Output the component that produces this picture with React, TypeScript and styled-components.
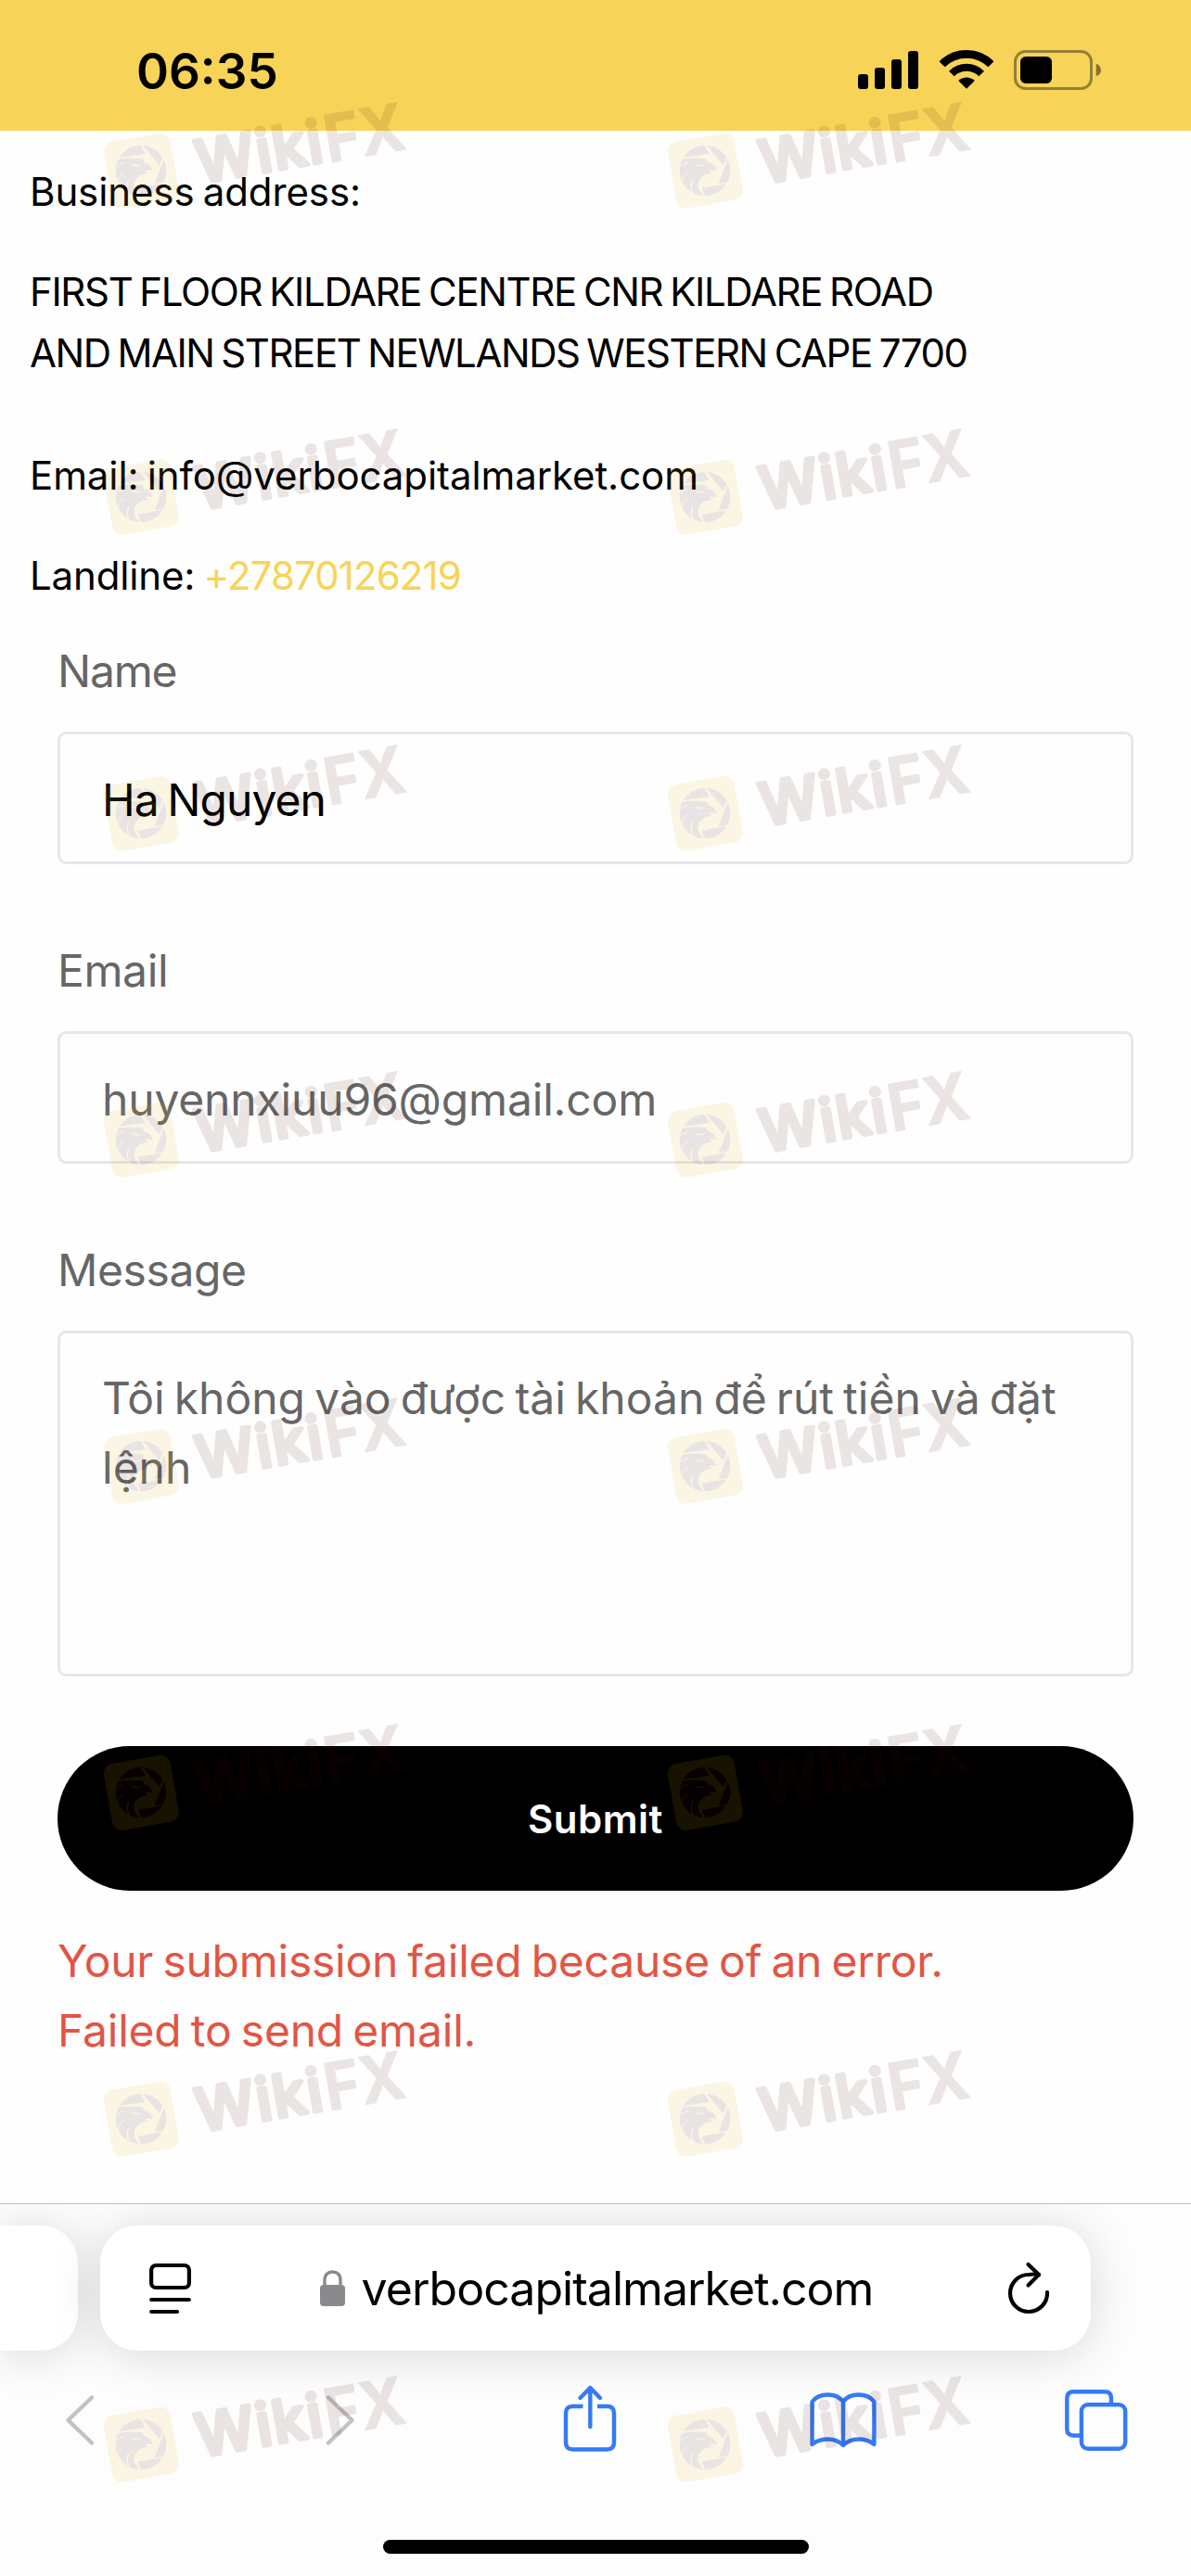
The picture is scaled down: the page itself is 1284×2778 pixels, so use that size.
import * as React from 'react';
import styled, { createGlobalStyle } from 'styled-components';

const GlobalStyle = createGlobalStyle`
  *, *::before, *::after { box-sizing: border-box; }
  body { margin: 0; background: #fff; }
`;

const Screen = styled.div`
  position: relative;
  width: 1284px;
  height: 2778px;
  overflow: hidden;
  display: flex;
  flex-direction: column;
  background: #fefefe;
  font-family: Inter, 'Noto Sans', sans-serif;
  color: #000;
`;

const StatusBar = styled.header`
  flex: none;
  height: 141px;
  background: #f7d358;
  display: flex;
  justify-content: space-between;
  padding: 45px 97px 0 147px;
`;

const Time = styled.span`
  font-size: 53px;
  line-height: 64px;
  font-weight: 600;
`;

const StatusIcons = styled.div`
  display: flex;
  gap: 22.5px;
  padding-top: 9px;

  svg {
    display: block;
  }
`;

const Address = styled.section`
  padding: 33px 32px 0;
  font-size: 42px;
  line-height: 66px;
  word-spacing: -2.5px;
`;

const Line = styled.p<{ $tracking?: number; $gap?: number }>`
  margin: 0 0 ${({ $gap = 0 }) => $gap}px;
  letter-spacing: ${({ $tracking = 0 }) => $tracking}px;
  white-space: pre;
`;

const Phone = styled.a`
  color: #f7d358;
  letter-spacing: -0.9px;
`;

const Form = styled.form`
  display: flex;
  flex-direction: column;
  margin: 32px 62px 0;
  font-size: 48px;
  line-height: 75px;
`;

const Label = styled.label<{ $tracking?: number }>`
  margin-bottom: 28px;
  color: #666;
  letter-spacing: ${({ $tracking = -0.4 }) => $tracking}px;
`;

const Input = styled.input<{ $color: string; $tracking: number }>`
  height: 143px;
  margin-bottom: 77px;
  padding: 4px 45px 0;
  border: 3px solid #e6e6eb;
  border-radius: 9px;
  outline: none;
  background: transparent;
  color: ${({ $color }) => $color};
  font: inherit;
  letter-spacing: ${({ $tracking }) => $tracking}px;
  word-spacing: -3px;
`;

const Textarea = styled.textarea`
  height: 373px;
  padding: 32px 20px 0 45px;
  border: 3px solid #e6e6eb;
  border-radius: 9px;
  outline: none;
  resize: none;
  background: transparent;
  color: #666;
  font: inherit;
  word-spacing: -3.4px;
`;

const Submit = styled.button`
  height: 156px;
  margin-top: 75px;
  border: 0;
  border-radius: 78px;
  background: #000;
  color: #fff;
  font: 600 42px Inter, 'Noto Sans', sans-serif;
  letter-spacing: 0.5px;
`;

const ErrorText = styled.div`
  margin-top: 38px;
  color: #e25544;
  word-spacing: -3px;
`;

const BrowserBar = styled.footer`
  display: flex;
  flex-direction: column;
  height: 402px;
  margin-top: auto;
  padding-top: 23px;
  border-top: 1px solid #bdbdbd;
  background: #fdfdfd;
  overflow: hidden;
`;

const TabStrip = styled.div`
  display: flex;
  gap: 24px;
`;

const PreviousTab = styled.div`
  width: 84px;
  height: 135px;
  border-radius: 0 40px 40px 0;
  background: #fff;
  box-shadow: 0 4px 52px rgba(0, 0, 0, 0.15);
`;

const UrlBar = styled.div`
  display: flex;
  align-items: center;
  justify-content: space-between;
  width: 1068px;
  height: 135px;
  padding: 0 44px 0 53px;
  border-radius: 40px;
  background: #fff;
  box-shadow: 0 4px 52px rgba(0, 0, 0, 0.15);

  svg {
    display: block;
  }
`;

const Url = styled.div`
  display: flex;
  align-items: center;
  gap: 18px;
  padding-right: 6px;
  font-size: 50px;
  line-height: 60px;
  letter-spacing: -0.97px;
  white-space: nowrap;
`;

const Toolbar = styled.nav`
  display: grid;
  grid-template-columns: 281px 269px 273px 273px 72px;
  padding: 33px 0 0 50px;
`;

const ToolbarIcon = styled.svg<{ $color?: string }>`
  display: block;
  width: 72px;
  height: 80px;
  fill: none;
  stroke: ${({ $color = '#357af6' }) => $color};
  stroke-width: 4.4;
  stroke-linecap: round;
  stroke-linejoin: round;
`;

const HomeIndicator = styled.div`
  width: 459px;
  height: 15px;
  margin: 91px auto 0;
  border-radius: 8px;
  background: #000;
`;

const WatermarkLayer = styled.div`
  position: absolute;
  inset: 0;
  display: grid;
  grid-template-columns: 608px 608px;
  grid-template-rows: 352px 341px repeat(4, 352px) 351px 352px;
  align-content: start;
  padding: 105px 0 0 92px;
  opacity: 0.1;
  pointer-events: none;

  svg {
    display: block;
    overflow: visible;
  }
`;

const Watermark: React.FC = () => (
  <svg width="400" height="120" viewBox="0 90 1200 360">
    <g transform="translate(30 180)">
      <rect x="42" y="39" width="218" height="218" rx="31" fill="#ebaf05" transform="rotate(-10 151 148)" />
      <clipPath id="shutter">
        <circle cx="150" cy="147" r="82" />
      </clipPath>
      <g clipPath="url(#shutter)" fill="#401010">
        <path d="M78 105L164 93L146 62L90 50L60 90Z" />
        <path d="M153 62L209 130L223 98L250 60L190 40Z" />
        <path d="M226 106L194 189L220 186L260 150Z" />
        <path d="M140 203L216 190L205 250L154 240Z" />
        <path d="M60 114C90 105 120 107 148 108C156 109 161 114 158 120C175 122 187 135 187 149C180 145 172 145 163 148C167 152 169 153 176 156C160 155 150 160 142 166C128 177 124 196 132 210C136 218 141 224 146 231C120 240 50 220 50 160Z" />
      </g>
      <g fill="none" stroke="#ebaf05" strokeLinecap="round">
        <path d="M124 127C131 132 138 134 146 129" strokeWidth="4" />
        <path d="M70 135C78 127 86 123 95 122" strokeWidth="3" />
        <path d="M75 182C77 170 84 160 94 152" strokeWidth="3" />
        <path d="M112 223C105 208 104 192 110 178" strokeWidth="4" />
      </g>
    </g>
    <g transform="translate(365 375) rotate(-9.85)" fill="#440a00" stroke="#440a00" strokeLinejoin="round" fontFamily="Inter, sans-serif">
      <text x="6" y="-6" textLength="412" lengthAdjust="spacing" fontSize="190" fontWeight="500" strokeWidth="14">
        Wiki
      </text>
      <text x="427" y="0" textLength="262" lengthAdjust="spacingAndGlyphs" fontSize="212" fontWeight="700" strokeWidth="3">
        FX
      </text>
    </g>
  </svg>
);

const watermarks = Array.from({ length: 16 }, (_, i) => i);

export default function App() {
  return (
    <Screen>
      <GlobalStyle />
      <StatusBar>
        <Time>06:35</Time>
        <StatusIcons>
          <svg width="65" height="43" viewBox="45 42 195 129">
            <rect x="45" y="120" width="33" height="48" rx="9" />
            <rect x="99" y="99" width="33" height="69" rx="9" />
            <rect x="153" y="72" width="33" height="96" rx="9" />
            <rect x="207" y="45" width="33" height="123" rx="9" />
          </svg>
          <svg width="58" height="43" viewBox="307 42 174 129" fill="none" stroke="#000">
            <path d="M314.8 87.8A112 112 0 0 1 473.2 87.8" strokeWidth="26" />
            <path d="M345.6 118.6A68.5 68.5 0 0 1 442.4 118.6" strokeWidth="24" />
            <path d="M394 167L367.5 141A38 38 0 0 1 420.5 141Z" fill="#000" stroke="none" />
          </svg>
          <svg width="94" height="43" viewBox="549 42 282 129">
            <rect x="553.5" y="46.5" width="246" height="120" rx="33" fill="none" stroke="#938036" strokeWidth="9" />
            <rect x="570" y="63" width="102" height="87" rx="17" />
            <path d="M815 86C836 92 836 121 815 127Z" fill="#85722f" />
          </svg>
        </StatusIcons>
      </StatusBar>

      <Address>
        <Line $gap={42} $tracking={-0.1}>
          Business address:
        </Line>
        <Line $tracking={-1.35}>FIRST FLOOR KILDARE CENTRE CNR KILDARE ROAD</Line>
        <Line $gap={66} $tracking={-1.45}>
          AND MAIN STREET NEWLANDS WESTERN CAPE 7700
        </Line>
        <Line $gap={42} $tracking={-0.09}>
          Email: info@verbocapitalmarket.com
        </Line>
        <Line $tracking={-0.15}>
          Landline: <Phone>+27870126219</Phone>
        </Line>
      </Address>

      <Form>
        <Label htmlFor="name" $tracking={-1.2}>
          Name
        </Label>
        <Input id="name" defaultValue="Ha Nguyen" $color="#000" $tracking={-0.95} />
        <Label htmlFor="email">Email</Label>
        <Input id="email" defaultValue="huyennxiuu96@gmail.com" $color="#666" $tracking={-0.17} />
        <Label htmlFor="message">Message</Label>
        <Textarea
          id="message"
          spellCheck={false}
          defaultValue="Tôi không vào được tài khoản để rút tiền và đặt lệnh"
        />
        <Submit type="button">Submit</Submit>
        <ErrorText>
          <Line $tracking={-0.25}>Your submission failed because of an error.</Line>
          <Line $tracking={-0.2}>Failed to send email.</Line>
        </ErrorText>
      </Form>

      <BrowserBar>
        <TabStrip>
          <PreviousTab />
          <UrlBar>
            <svg width="45" height="56" viewBox="0 0 45 56" fill="none" stroke="#000" strokeWidth="4.2" strokeLinecap="round">
              <rect x="2.1" y="3" width="40.8" height="24" rx="5" />
              <path d="M2.2 40H42.8M2.2 53H30" />
            </svg>
            <Url>
              <svg width="27" height="39" viewBox="0 0 27 39">
                <path d="M5 18V11C5 5 8.5 2 13.5 2C18.5 2 22 5 22 11V18" fill="none" stroke="#8a8a8c" strokeWidth="3.4" />
                <rect y="16" width="27" height="23" rx="4" fill="#8a8a8c" />
              </svg>
              <span>verbocapitalmarket.com</span>
            </Url>
            <svg width="46" height="60" viewBox="0 0 46 60" fill="none" stroke="#000" strokeWidth="4.2" strokeLinecap="round" strokeLinejoin="round">
              <path d="M43 34A20 20 0 1 1 23 15Q29 14 34 15" />
              <path d="M22.5 4L34 15L22.500 26.500" />
            </svg>
          </UrlBar>
        </TabStrip>
        <Toolbar>
          <ToolbarIcon $color="#c2c2c2" viewBox="0 0 72 80">
            <path d="M49 17.5L23.5 42L49 66.5" />
          </ToolbarIcon>
          <ToolbarIcon $color="#c2c2c2" viewBox="0 0 72 80">
            <path d="M23 17.5L48.5 42L23 66.5" />
          </ToolbarIcon>
          <ToolbarIcon viewBox="0 0 72 80">
            <path d="M28.5 27H17.5Q10 27 10 34.5V66Q10 73.5 17.5 73.5H54.5Q62 73.5 62 66V34.5Q62 27 54.5 27H44" strokeLinecap="butt" />
            <path d="M36.3 7V49M25.5 18L36.3 7L47 18" />
          </ToolbarIcon>
          <ToolbarIcon viewBox="0 0 72 80">
            <path d="M36 22C32 16.5 26 14.5 19.5 14.5C12 14.5 6 17.5 2.6 22V68C7 64.5 13 62.5 19.5 62.5C26 62.5 32 65 36 69C40 65 46 62.5 52.5 62.5C59 62.5 65 64.5 69.4 68V22C66 17.5 60 14.5 52.5 14.5C46 14.5 40 16.5 36 22V69" />
          </ToolbarIcon>
          <ToolbarIcon viewBox="0 0 72 80">
            <rect x="19.9" y="25.2" width="47.3" height="47.6" rx="7" />
            <path d="M18 58.5H11.5Q4.3 58.5 4.3 51.5V18.2Q4.3 11.2 11.5 11.2H45Q52 11.2 52 18.2V24" strokeLinecap="butt" />
          </ToolbarIcon>
        </Toolbar>
        <HomeIndicator />
      </BrowserBar>

      <WatermarkLayer>
        {watermarks.map((id) => (
          <Watermark key={id} />
        ))}
      </WatermarkLayer>
    </Screen>
  );
}
